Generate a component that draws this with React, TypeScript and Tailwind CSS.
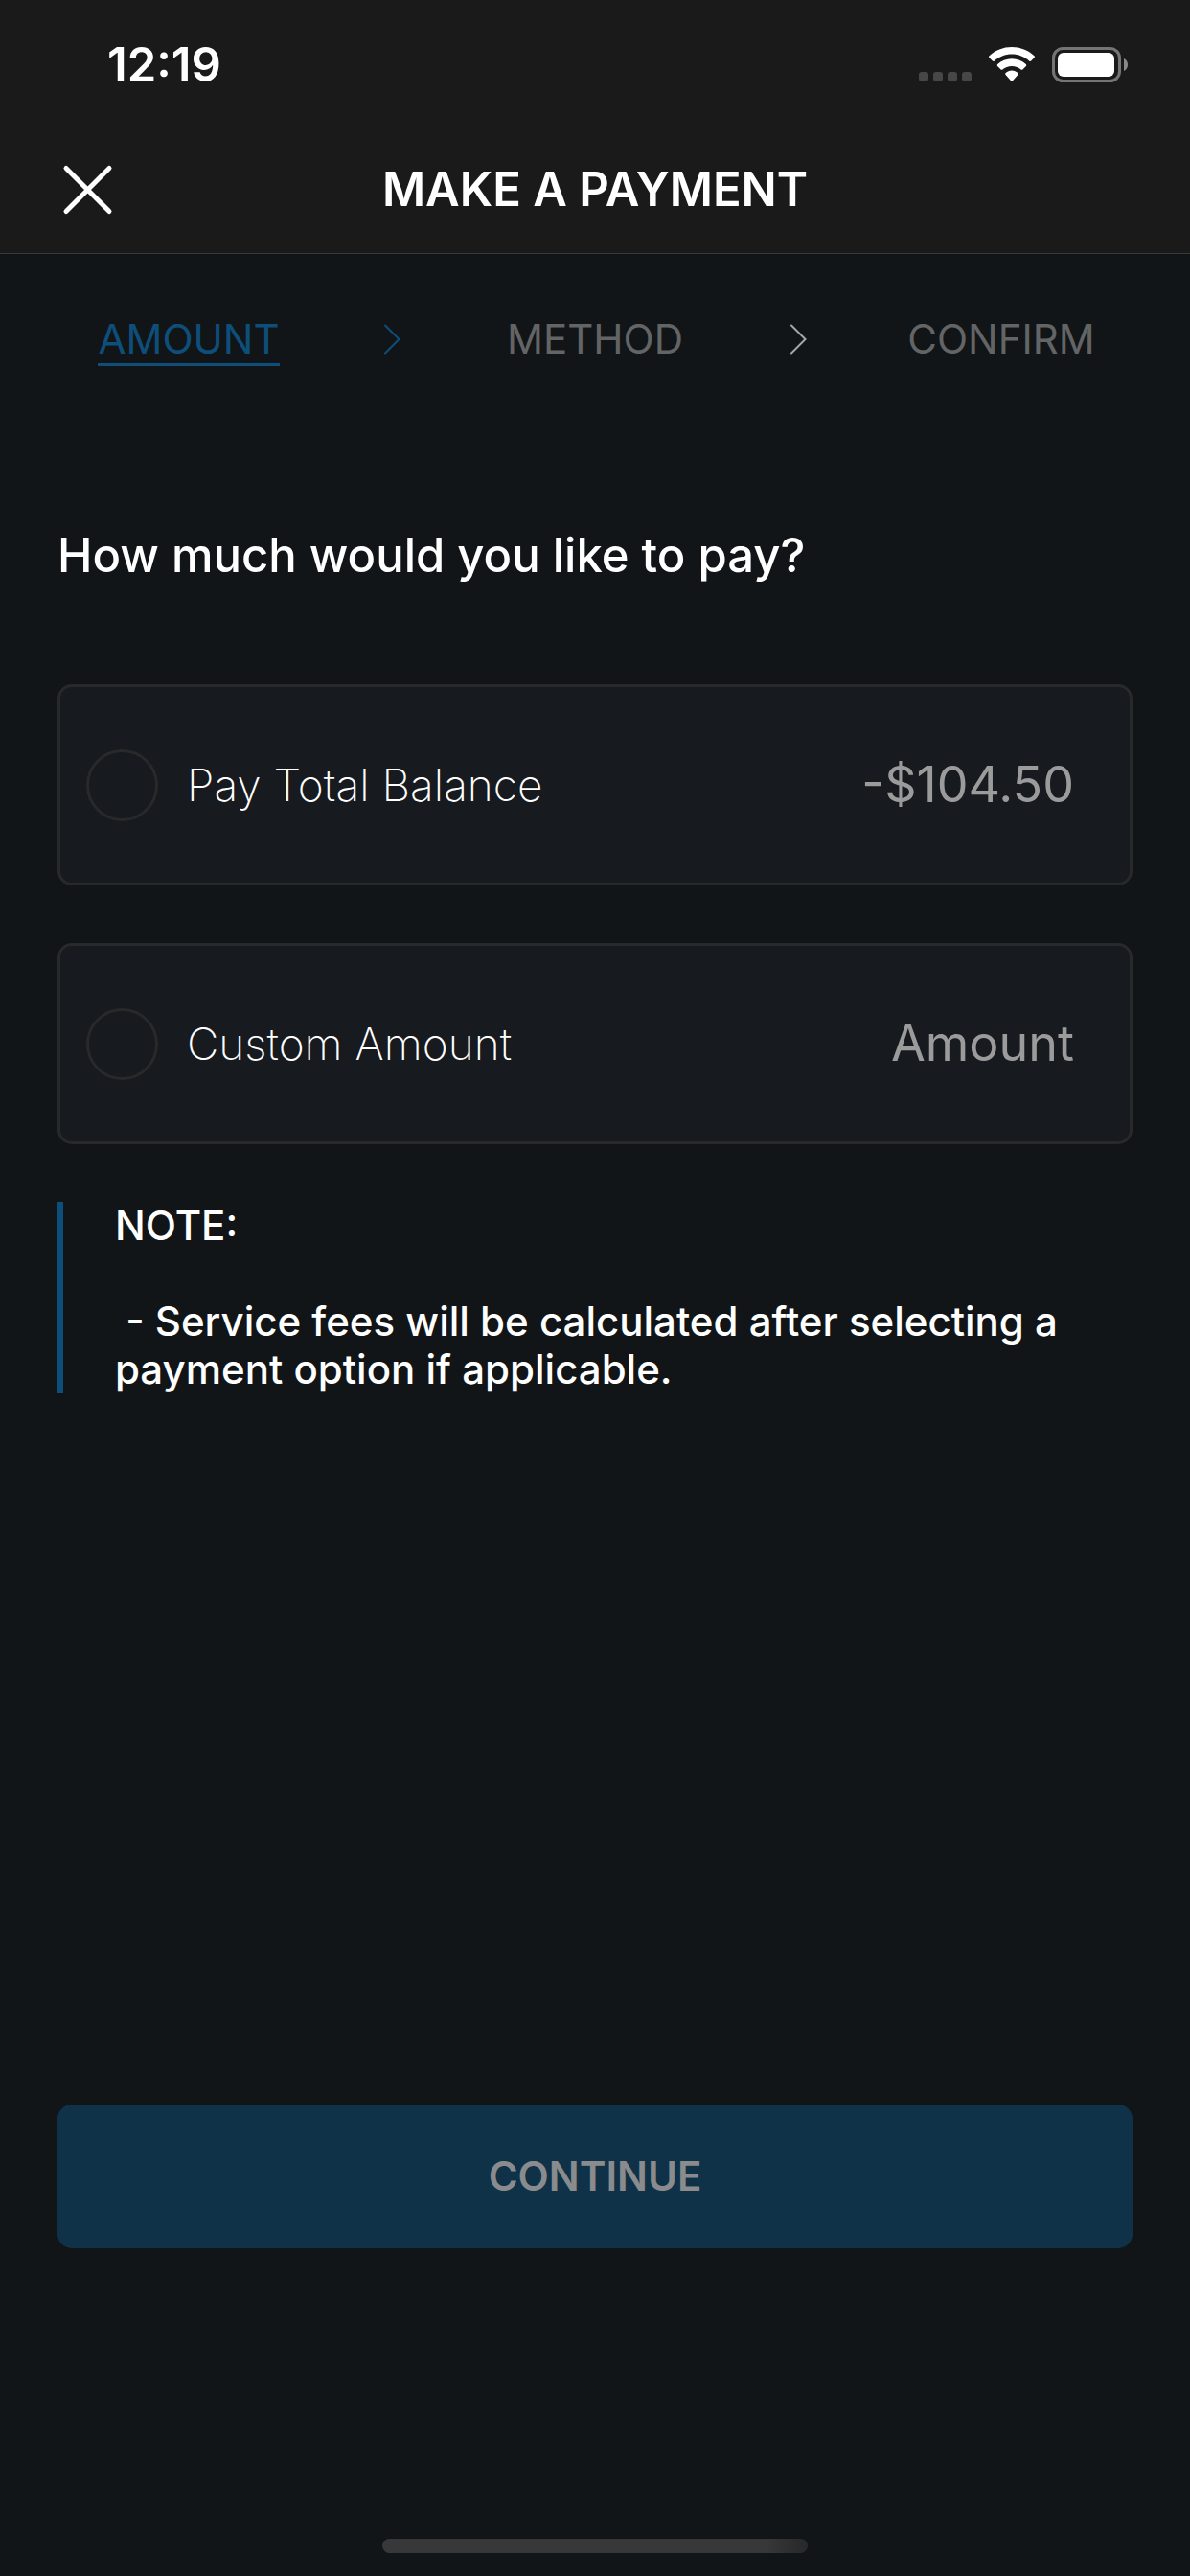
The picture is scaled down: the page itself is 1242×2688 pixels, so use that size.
import clsx from "clsx";
import { Fragment } from "react";

interface Step {
  name: string;
  active: boolean;
}

const steps: Step[] = [
  { name: "AMOUNT", active: true },
  { name: "METHOD", active: false },
  { name: "CONFIRM", active: false },
];

const SignalIcon = () => (
  <div className="mt-[26px] flex gap-[5px]">
    <span className="size-2.5 rounded-[3px] bg-[#474747]" />
    <span className="size-2.5 rounded-[3px] bg-[#474747]" />
    <span className="size-2.5 rounded-[3px] bg-[#474747]" />
    <span className="size-2.5 rounded-[3px] bg-[#474747]" />
  </div>
);

const WifiIcon = () => (
  <svg className="h-9 w-12" viewBox="0 0 48 36" fill="#fff">
    <path d="M24 0C33 0 41.200 3.400 47.500 9.200C48.100 9.800 48.100 10.500 47.600 11.100L44.200 14.600C43.600 15.200 42.900 15.200 42.300 14.700C37.500 10.300 31.100 7.600 24 7.600C16.900 7.600 10.500 10.300 5.700 14.700C5.100 15.200 4.400 15.200 3.800 14.600L0.400 11.100C-0.100 10.500 -0.100 9.800 0.500 9.200C6.800 3.400 15 0 24 0Z" />
    <path d="M24 12.300C29.600 12.300 34.800 14.400 38.800 18C39.400 18.600 39.400 19.300 38.900 19.900L35.400 23.400C34.900 24 34.200 24 33.600 23.500C31 21.200 27.700 19.900 24 19.900C20.300 19.900 17 21.200 14.400 23.500C13.800 24 13.100 24 12.600 23.400L9.100 19.900C8.600 19.300 8.600 18.600 9.200 18C13.200 14.400 18.400 12.300 24 12.300Z" />
    <path d="M24 24.600C26.400 24.600 28.600 25.500 30.300 27C31 27.600 31 28.400 30.400 29L24.900 35.200C24.300 35.900 23.700 35.900 23.100 35.200L17.600 29C17 28.400 17 27.600 17.700 27C19.400 25.500 21.600 24.600 24 24.600Z" />
  </svg>
);

const BatteryIcon = () => (
  <svg className="h-[37px] w-20" viewBox="0 0 80 37" fill="none">
    <rect
      x="1.5"
      y="1.5"
      width="69"
      height="34"
      rx="10"
      stroke="#757575"
      strokeWidth="3"
    />
    <rect x="6" y="6" width="59" height="25" rx="6" fill="#fff" />
    <path d="M75 12C77.400 13 79 15.500 79 18.500C79 21.500 77.400 24 75 25Z" fill="#8a8a8a" />
  </svg>
);

const StepChevron = ({ active }: { active: boolean }) => (
  <svg
    className={clsx(
      "h-8 w-[18px] shrink-0",
      active ? "text-[#0d4f7a]" : "text-[#a5a7a8]",
    )}
    viewBox="0 0 18 32"
    fill="none"
    stroke="currentColor"
    strokeWidth="2"
    strokeLinecap="round"
  >
    <path d="M2 1.500L16.500 16L2 30.500" />
  </svg>
);

const StatusBar = () => (
  <div className="flex h-[132px] items-start justify-between pr-16 pl-28">
    <span className="pt-10 text-[49px] leading-[56px] font-semibold">12:19</span>
    <div className="flex pt-[49px]">
      <SignalIcon />
      <div className="ml-[18px]">
        <WifiIcon />
      </div>
      <div className="ml-[18px]">
        <BatteryIcon />
      </div>
    </div>
  </div>
);

const Header = () => (
  <header className="border-b border-[#38393a] bg-[#1a1a1a]">
    <StatusBar />
    <div className="grid h-[132px] grid-cols-[1fr_auto_1fr] items-center px-[60px]">
      <button type="button" aria-label="Close" className="w-fit p-1">
        <svg
          className="size-[54px]"
          viewBox="0 0 54 54"
          fill="none"
          stroke="#fff"
          strokeWidth="5"
          strokeLinecap="round"
        >
          <path d="M5 4.500L50 49.500M50 4.500L5 49.500" />
        </svg>
      </button>
      <h1 className="text-[49px] leading-[60px] font-semibold">
        MAKE A PAYMENT
      </h1>
    </div>
  </header>
);

const radioClass =
  "size-[75px] shrink-0 appearance-none rounded-full border-3 border-[#28292a] checked:border-[#0d4f7a] checked:bg-[#0d4f7a]";

const cardClass =
  "flex h-[210px] items-center rounded-[15px] border-3 border-[#28292a] bg-[#171a1e] pr-[58px] pl-[27px]";

const App = () => {
  return (
    <div className="flex min-h-screen flex-col bg-[#111517] font-['Inter','Liberation_Sans',sans-serif] text-white">
      <Header />

      <main className="flex grow flex-col px-[60px]">
        <nav className="mt-16 grid grid-cols-5 items-start justify-items-center px-[31px] text-[42px] leading-[50px]">
          {steps.map((step, i) => (
            <Fragment key={step.name}>
              {i > 0 && (
                <div className="flex h-[50px] items-center">
                  <StepChevron active={steps[i - 1].active} />
                </div>
              )}
              <a
                href="#"
                className={clsx(
                  "border-b-3",
                  step.active
                    ? "border-[#0d4f7a] text-[#0d4f7a]"
                    : "border-transparent text-[#636465]",
                )}
              >
                {step.name}
              </a>
            </Fragment>
          ))}
        </nav>

        <h2 className="mt-[168px] text-[49px] leading-[60px] font-medium">
          How much would you like to pay?
        </h2>

        <form className="flex grow flex-col">
          <div className="mt-[104px] flex flex-col gap-[60px]">
            <div className={cardClass}>
              <input type="radio" id="total" name="payment" className={radioClass} />
              <label htmlFor="total" className="grow pl-[30px] text-[46px] leading-[60px] font-extralight">
                Pay Total Balance
              </label>
              <span className="text-[52px] leading-[60px] text-[#9b9b9b]">
                -$104.50
              </span>
            </div>
            <div className={cardClass}>
              <input type="radio" id="custom" name="payment" className={radioClass} />
              <label htmlFor="custom" className="shrink-0 pl-[30px] text-[46px] leading-[60px] font-extralight">
                Custom Amount
              </label>
              <input
                type="text"
                inputMode="decimal"
                aria-label="Amount"
                placeholder="Amount"
                className="min-w-0 grow bg-transparent text-right text-[52px] leading-[60px] outline-none placeholder:text-[#9b9b9b]"
              />
            </div>
          </div>

          <div className="mt-[60px] border-l-6 border-[#0d4f7a] pl-[54px] text-[42px] leading-[50px] font-medium">
            <p>NOTE:</p>
            <p className="mt-[50px] whitespace-pre-wrap">
              {" - Service fees will be calculated after selecting a payment option if applicable."}
            </p>
          </div>

          <button
            type="button"
            className="mt-auto h-[150px] rounded-[15px] bg-[#103248] text-[42px] leading-[50px] font-semibold text-[#8a8b8c]"
          >
            CONTINUE
          </button>
        </form>
      </main>

      <footer className="flex justify-center pt-[303px] pb-6">
        <div className="h-[15px] w-[444px] rounded-full bg-linear-to-r from-[#373839] from-90% to-[#26282a]" />
      </footer>
    </div>
  );
};

export default App;
